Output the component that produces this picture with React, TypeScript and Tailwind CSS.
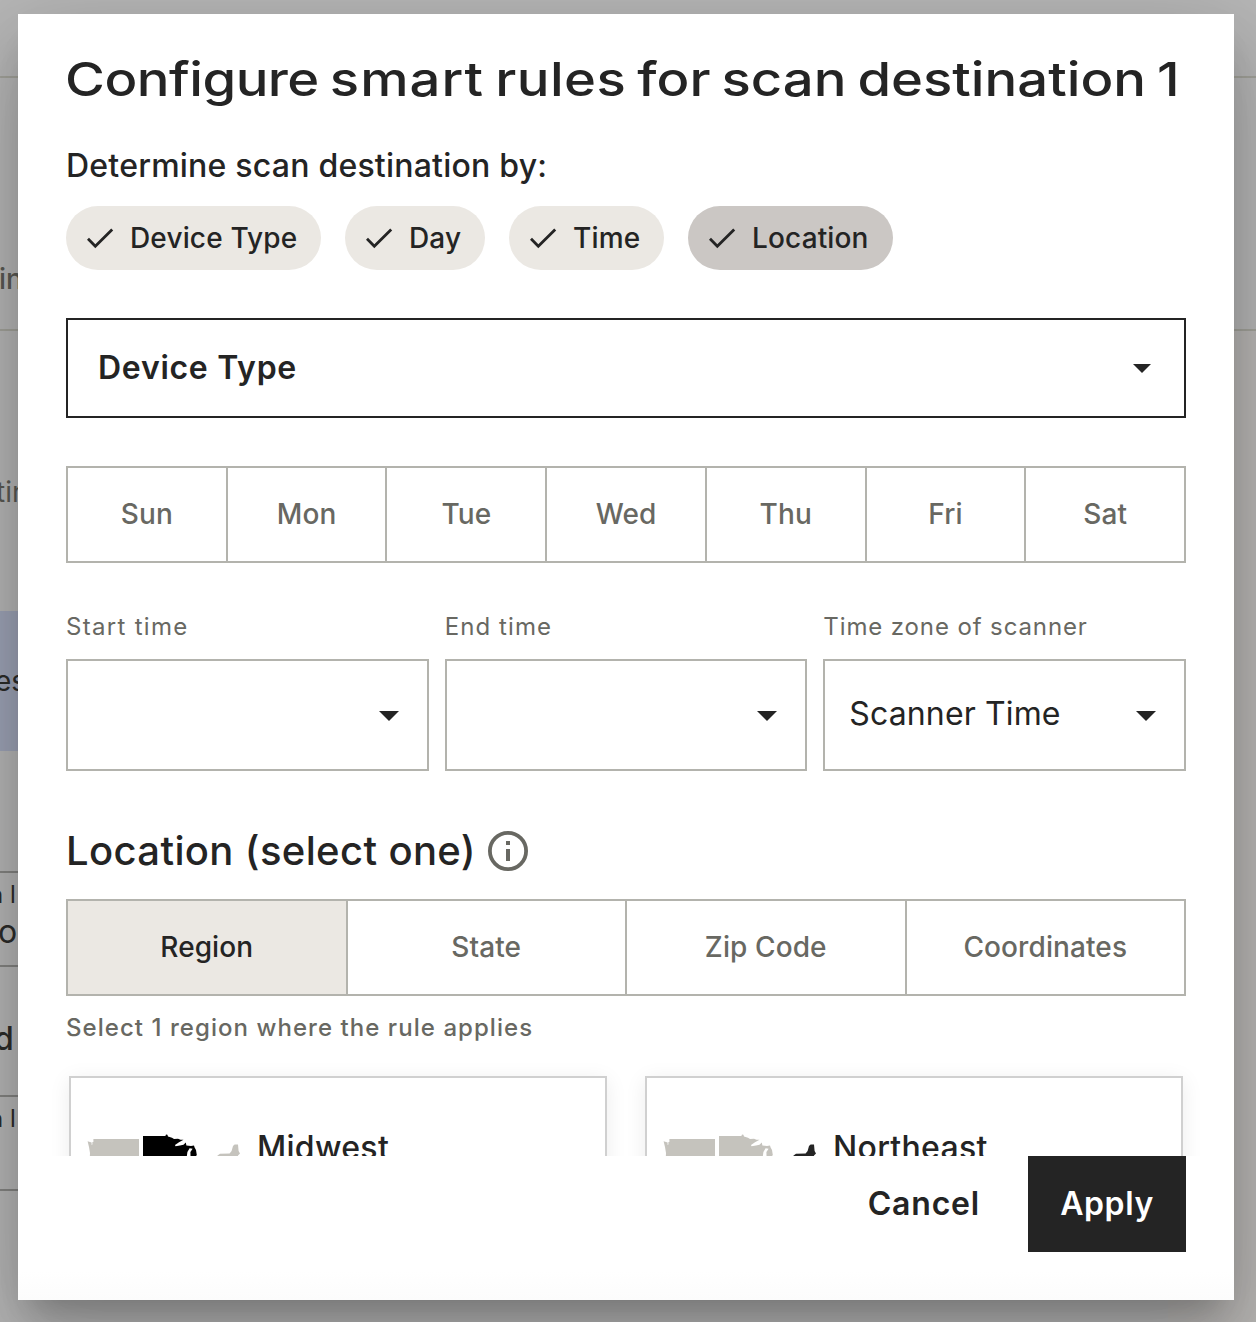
import React from 'react';

function Check() {
  return (
    <svg className="h-8 w-8 shrink-0" viewBox="0 0 32 32" fill="none">
      <path d="M4 16.8 11.3 24.2 28.2 7.4" stroke="#242424" strokeWidth="2.8" />
    </svg>
  );
}

function Caret({ className }: { className: string }) {
  return (
    <svg className={className} viewBox="0 0 20 10">
      <path d="M0 0H20L10 10Z" fill="#242424" />
    </svg>
  );
}

const chips = [
  { label: 'Device Type', width: 'w-[255px]', tone: 'bg-[#ebe8e3]' },
  { label: 'Day', width: 'w-[140px]', tone: 'bg-[#ebe8e3]' },
  { label: 'Time', width: 'w-[155px]', tone: 'bg-[#ebe8e3]' },
  { label: 'Location', width: 'w-[205px]', tone: 'bg-[#cbc7c4]' },
];

const days = ['Sun', 'Mon', 'Tue', 'Wed', 'Thu', 'Fri', 'Sat'];

function Toggle({ label, selected }: { label: string; selected?: boolean }) {
  return (
    <button
      className={
        'flex-1 basis-0 border-r-2 border-[#b3b3ad] pb-0.5 text-[28px] font-medium tracking-[0.1px] last:border-r-0 ' +
        (selected ? 'bg-[#ebe8e3] text-[#242424]' : 'text-[#686862]')
      }
    >
      {label}
    </button>
  );
}

function TimeField({ label, value, tracking }: { label: string; value?: string; tracking: string }) {
  return (
    <div className="flex flex-1 basis-0 flex-col">
      <span className={`h-8 text-2xl whitespace-nowrap text-[#686862] ${tracking}`}>{label}</span>
      <div className="mt-4 flex h-28 items-center justify-between border-2 border-[#b3b3ad] pr-[28px] pl-6 text-[32px] tracking-[0.13px]">
        <span className="pb-0.5 whitespace-nowrap">{value}</span>
        <Caret className="mt-0.5 h-[10px] w-5" />
      </div>
    </div>
  );
}

function RegionMap({ west, midwest, northeast }: { west: string; midwest: string; northeast: string }) {
  return (
    <svg className="h-[100px] w-[156px] shrink-0" viewBox="0 0 156 100">
      <path
        fill={west}
        d="M.6 7.2 3 8 4.6 8.6V11L5.4 10.6V8H6.4V5H52V62H20L8 48 2.5 30 3 19 2 13Z"
      />
      <path
        fill={midwest}
        d="M56 2H78.4L79 .6 80.4 .8 81 2.6 85 3.8 87 5 91 4.8 93.5 5.8 96.5 5.8 92 8.2 88 11 88.5 12.2 93 11.6 96.5 10.8 98.8 8.6 99.4 11.4 104 12 107 11.6 107.6 13.4 109 16 109.8 21 106 26 103.6 24 103.4 18 105.6 14.8 102.6 14.2 100.4 18 99.6 24 98 60H56Z"
      />
      <path fill={northeast} d="M130.6 21.4 133 19.8 142.6 19.4 144.6 17 146 12 147.6 10.4 151 10.4 151.6 17 153 19.6 151 21.6 148 36 128 40 126 30Z" />
    </svg>
  );
}

function RegionCard({ label, map }: { label: string; map: React.ReactNode }) {
  return (
    <div className="flex h-[160px] flex-1 basis-0 items-start border-2 border-[#d0d0d0] bg-white pt-[50px] pl-4 shadow-[0_4px_20px_rgba(0,30,20,0.08)]">
      <div className="pt-[6px]">{map}</div>
      <span className="ml-[14px] text-[32px] leading-10 font-medium tracking-[0.3px]">{label}</span>
    </div>
  );
}

function BackgroundPage() {
  return (
    <div className="flex h-full overflow-hidden whitespace-nowrap text-[#2c2c2a]">
      <div className="w-[1168px] shrink-0 bg-[#b8b8b8]">
        <div className="h-[78px] border-b-2 border-[#a3a39b]" />
        <div className="h-[253px] border-b-2 border-[#a3a39b] pt-[184px] text-[28px] leading-[34px] font-medium text-[#5a5a54]">
          <span className="-ml-px">in</span>
        </div>
        <div className="h-[280px] pt-[144px] text-[28px] leading-[34px] text-[#5a5a54]">
          <span className="-ml-[4px]">tin</span>
        </div>
        <div className="h-[140px] bg-[#9fa5b8] pt-[53px] text-[28px] leading-[34px]">
          <span className="-ml-[5px]">es</span>
        </div>
        <div className="h-[122px] border-b-2 border-[#858583]" />
        <div className="h-[94px] border-b-2 border-[#858583] pt-[6px]">
          <div className="-ml-[11px] text-2xl leading-8">n l</div>
          <div className="-ml-[2px] text-[32px] leading-[42px]">o</div>
        </div>
        <div className="h-[130px] border-b-2 border-[#858583] pt-[51px]">
          <div className="-ml-[6px] text-[32px] leading-[42px] font-medium">d</div>
        </div>
        <div className="h-[94px] border-b-2 border-[#858583] pt-[6px]">
          <div className="-ml-[11px] text-2xl leading-8">n l</div>
        </div>
      </div>
      <div className="flex-1 bg-[#bab8b6]">
        <div className="h-[78px] border-b-2 border-[#a3a39b] bg-[#b8b8b8]" />
        <div className="h-[253px] border-b-2 border-[#a3a39b] bg-[#b8b8b8]" />
      </div>
    </div>
  );
}

export default function App() {
  return (
    <div className="relative h-[1322px] w-[1256px] overflow-hidden font-['Inter',sans-serif] text-[#242424]">
      <BackgroundPage />

      <div className="absolute top-[14px] left-[18px] flex h-[1286px] w-[1216px] flex-col bg-white shadow-[0_22px_30px_-14px_rgba(0,0,0,0.2),0_48px_76px_6px_rgba(0,0,0,0.14),0_18px_92px_16px_rgba(0,0,0,0.12)]">
        <div className="flex h-[1142px] flex-col overflow-hidden px-12 pt-[33px]">
          <h1 className="-ml-px h-16 origin-left scale-x-[1.158] text-[47px] leading-16 font-medium [word-spacing:-3px] whitespace-nowrap">
            <span className="tracking-[-0.45px]">Configure</span> <span className="tracking-[0.9px]">smart</span>{' '}
            <span className="tracking-[0.4px]">rules</span> for scan destination 1
          </h1>

          <p className="mt-[35px] h-10 text-[32px] leading-10 font-medium tracking-[0.22px]">Determine scan destination by:</p>
          <div className="mt-5 flex gap-6">
            {chips.map((chip) => (
              <div key={chip.label} className={`flex h-16 items-center rounded-full pl-[18px] ${chip.width} ${chip.tone}`}>
                <Check />
                <span className="ml-[14px] text-[28px] font-medium tracking-[0.15px] whitespace-nowrap">{chip.label}</span>
              </div>
            ))}
          </div>

          <div className="mt-12 flex h-[100px] shrink-0 items-center justify-between border-2 border-[#242424] pr-[33px] pl-[30px]">
            <span className="text-[32px] font-semibold tracking-[0.72px]">Device Type</span>
            <Caret className="h-[9px] w-[18px]" />
          </div>

          <div className="mt-12 flex h-[97px] shrink-0 border-2 border-[#b3b3ad]">
            {days.map((day) => (
              <Toggle key={day} label={day} />
            ))}
          </div>

          <div className="mt-12 flex gap-4">
            <TimeField label="Start time" tracking="tracking-[1.3px]" />
            <TimeField label="End time" tracking="tracking-[1.1px]" />
            <TimeField label="Time zone of scanner" tracking="tracking-[0.88px]" value="Scanner Time" />
          </div>

          <div className="mt-14 flex h-12 shrink-0 items-center">
            <h2 className="w-[410px] text-[40px] leading-12 font-medium tracking-[0.36px] whitespace-nowrap">Location (select one)</h2>
            <svg className="ml-3 h-10 w-10" viewBox="0 0 40 40" fill="none">
              <circle cx="20" cy="20" r="18.1" stroke="#686862" strokeWidth="3.8" />
              <path d="M20 10V14M20 18V30" stroke="#686862" strokeWidth="4" />
            </svg>
          </div>

          <div className="mt-6 flex h-[97px] shrink-0 border-2 border-[#b3b3ad]">
            <Toggle label="Region" selected />
            <Toggle label="State" />
            <Toggle label="Zip Code" />
            <Toggle label="Coordinates" />
          </div>
          <p className="mt-4 h-8 shrink-0 text-2xl font-medium tracking-[1.05px] text-[#686862]">
            Select 1 region where the rule applies
          </p>

          <div className="mx-[3px] mt-8 flex shrink-0 gap-[38px]">
            <RegionCard label="Midwest" map={<RegionMap west="#c5c3bd" midwest="#000000" northeast="#c5c3bd" />} />
            <RegionCard label="Northeast" map={<RegionMap west="#c5c3bd" midwest="#c5c3bd" northeast="#242424" />} />
          </div>
        </div>

        <div className="flex flex-1 items-start justify-end bg-linear-to-b from-white from-80% to-[#fcfcfc] px-12 text-[32px] font-semibold">
          <button className="mr-12 h-24 tracking-[0.8px]">Cancel</button>
          <button className="h-24 w-[158px] bg-[#242424] tracking-[0.6px] text-white">Apply</button>
        </div>
      </div>
    </div>
  );
}
